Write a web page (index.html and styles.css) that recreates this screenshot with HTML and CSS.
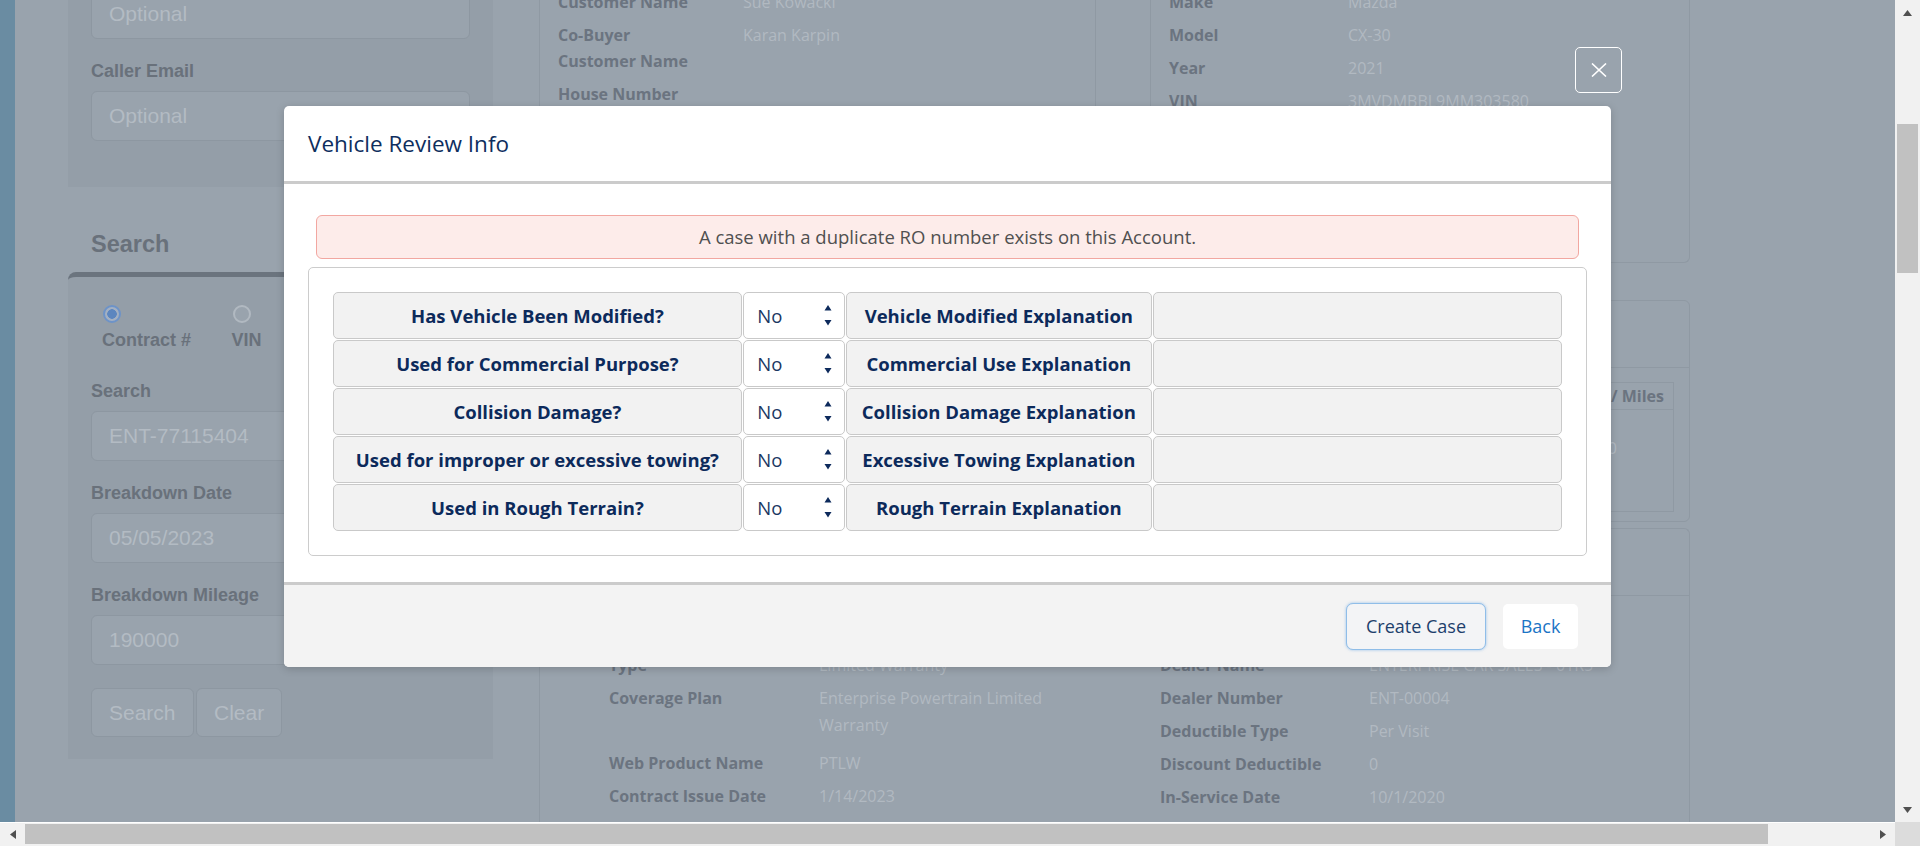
FILE: index.html
```html
<!DOCTYPE html>
<html lang="en">
<head>
<meta charset="utf-8">
<title>Vehicle Review Info</title>
<link rel="stylesheet" href="styles.css">
</head>
<body>
<div class="screen">
  <div class="viewport">
    <div class="page">
      <div class="strip"></div>

      <div class="leftcol">
        <div class="panel panel-caller">
          <div class="input">Optional</div>
          <div class="flabel">Caller Email</div>
          <div class="input">Optional</div>
        </div>
        <div class="sect-title">Search</div>
        <div class="panel panel-search">
          <div class="radios">
            <div class="radio-item"><span class="radio checked"></span><span class="rlabel">Contract #</span></div>
            <div class="radio-item"><span class="radio"></span><span class="rlabel">VIN</span></div>
          </div>
          <div class="flabel first">Search</div>
          <div class="input">ENT-77115404</div>
          <div class="flabel">Breakdown Date</div>
          <div class="input">05/05/2023</div>
          <div class="flabel">Breakdown Mileage</div>
          <div class="input">190000</div>
          <div class="btnrow">
            <div class="pbtn pbtn-search">Search</div>
            <div class="pbtn pbtn-clear">Clear</div>
          </div>
        </div>
      </div>

      <div class="maincol">
        <div class="toprow">
          <div class="card card-a">
            <div class="drow"><div class="dlabel">Customer Name</div><div class="dval">Sue Kowacki</div></div>
            <div class="drow"><div class="dlabel">Co-Buyer<br>Customer Name</div><div class="dval">Karan Karpin</div></div>
            <div class="drow"><div class="dlabel">House Number</div><div class="dval"></div></div>
          </div>
          <div class="card card-b">
            <div class="drow"><div class="dlabel">Make</div><div class="dval">Mazda</div></div>
            <div class="drow"><div class="dlabel">Model</div><div class="dval">CX-30</div></div>
            <div class="drow"><div class="dlabel">Year</div><div class="dval">2021</div></div>
            <div class="drow"><div class="dlabel">VIN</div><div class="dval">3MVDMBBL9MM303580</div></div>
          </div>
        </div>

        <div class="card card-c">
          <div class="card-head"></div>
          <div class="tbl-wrap">
            <div class="tbl">
              <div class="tbl-head"><div class="th">Mileage / Miles</div></div>
              <div class="tbl-body"><div class="td">190000</div></div>
            </div>
          </div>
        </div>

        <div class="card card-d">
          <div class="card-head"></div>
          <div class="details">
            <div class="dcol dcol-left">
              <div class="drow2"><div class="dlabel2">Type</div><div class="dval2">Limited Warranty</div></div>
              <div class="drow2 two"><div class="dlabel2">Coverage Plan</div><div class="dval2">Enterprise Powertrain Limited<br>Warranty</div></div>
              <div class="drow2"><div class="dlabel2">Web Product Name</div><div class="dval2">PTLW</div></div>
              <div class="drow2"><div class="dlabel2">Contract Issue Date</div><div class="dval2">1/14/2023</div></div>
            </div>
            <div class="dcol dcol-right">
              <div class="drow2"><div class="dlabel2">Dealer Name</div><div class="dval2">ENTERPRISE CAR SALES - 01R5</div></div>
              <div class="drow2"><div class="dlabel2">Dealer Number</div><div class="dval2">ENT-00004</div></div>
              <div class="drow2"><div class="dlabel2">Deductible Type</div><div class="dval2">Per Visit</div></div>
              <div class="drow2"><div class="dlabel2">Discount Deductible</div><div class="dval2">0</div></div>
              <div class="drow2"><div class="dlabel2">In-Service Date</div><div class="dval2">10/1/2020</div></div>
            </div>
          </div>
        </div>
      </div>

      <div class="close-btn">
        <svg width="16" height="14" viewBox="0 0 16 14"><path d="M1 0.5 L15 13.5 M15 0.5 L1 13.5" stroke="#ffffff" stroke-width="1.6" fill="none"/></svg>
      </div>

      <div class="modal">
        <div class="modal-head">Vehicle Review Info</div>
        <div class="modal-body">
          <div class="alert">A case with a duplicate RO number exists on this Account.</div>
          <div class="qcard">
            <div class="qgrid">
              <div class="qc">Has Vehicle Been Modified?</div>
              <div class="qsel"><span>No</span><svg class="spin" width="8" height="21" viewBox="0 0 8 21"><path d="M0.5 5.5 L4 0 L7.5 5.5 Z M0.5 15 L7.5 15 L4 20.5 Z" fill="#0d2a5c"/></svg></div>
              <div class="qc">Vehicle Modified Explanation</div>
              <div class="qin"></div>

              <div class="qc">Used for Commercial Purpose?</div>
              <div class="qsel"><span>No</span><svg class="spin" width="8" height="21" viewBox="0 0 8 21"><path d="M0.5 5.5 L4 0 L7.5 5.5 Z M0.5 15 L7.5 15 L4 20.5 Z" fill="#0d2a5c"/></svg></div>
              <div class="qc">Commercial Use Explanation</div>
              <div class="qin"></div>

              <div class="qc">Collision Damage?</div>
              <div class="qsel"><span>No</span><svg class="spin" width="8" height="21" viewBox="0 0 8 21"><path d="M0.5 5.5 L4 0 L7.5 5.5 Z M0.5 15 L7.5 15 L4 20.5 Z" fill="#0d2a5c"/></svg></div>
              <div class="qc">Collision Damage Explanation</div>
              <div class="qin"></div>

              <div class="qc">Used for improper or excessive towing?</div>
              <div class="qsel"><span>No</span><svg class="spin" width="8" height="21" viewBox="0 0 8 21"><path d="M0.5 5.5 L4 0 L7.5 5.5 Z M0.5 15 L7.5 15 L4 20.5 Z" fill="#0d2a5c"/></svg></div>
              <div class="qc">Excessive Towing Explanation</div>
              <div class="qin"></div>

              <div class="qc">Used in Rough Terrain?</div>
              <div class="qsel"><span>No</span><svg class="spin" width="8" height="21" viewBox="0 0 8 21"><path d="M0.5 5.5 L4 0 L7.5 5.5 Z M0.5 15 L7.5 15 L4 20.5 Z" fill="#0d2a5c"/></svg></div>
              <div class="qc">Rough Terrain Explanation</div>
              <div class="qin"></div>
            </div>
          </div>
        </div>
        <div class="modal-foot">
          <div class="mbtn mbtn-create">Create Case</div>
          <div class="mbtn mbtn-back">Back</div>
        </div>
      </div>
    </div>

    <div class="vscroll">
      <div class="sb-arrow"><svg width="9" height="6" viewBox="0 0 9 6"><path d="M0 6 L4.5 0 L9 6 Z" fill="#505050"/></svg></div>
      <div class="vtrack"><div class="vthumb"></div></div>
      <div class="sb-arrow"><svg width="9" height="6" viewBox="0 0 9 6"><path d="M0 0 L9 0 L4.5 6 Z" fill="#505050"/></svg></div>
    </div>
  </div>

  <div class="hscroll">
    <div class="hbar">
      <div class="sb-harrow"><svg width="6" height="9" viewBox="0 0 6 9"><path d="M6 0 L6 9 L0 4.5 Z" fill="#505050"/></svg></div>
      <div class="htrack"><div class="hthumb"></div></div>
      <div class="sb-harrow"><svg width="6" height="9" viewBox="0 0 6 9"><path d="M0 0 L6 4.5 L0 9 Z" fill="#505050"/></svg></div>
    </div>
    <div class="corner"></div>
  </div>
</div>
</body>
</html>
```

FILE: styles.css
```css
* { box-sizing: border-box; }

html, body {
  margin: 0;
  padding: 0;
  width: 1920px;
  height: 846px;
  overflow: hidden;
}

.screen {
  display: flex;
  flex-direction: column;
  width: 1920px;
  height: 846px;
}

.viewport {
  display: flex;
  height: 822px;
  flex: none;
}

.page {
  position: relative;
  flex: 1;
  overflow: hidden;
  background: #99a3ad;
  display: flex;
  align-items: flex-start;
}

.strip {
  width: 15px;
  flex: none;
  align-self: stretch;
  background: #6a8ca2;
}

/* ---------- left column ---------- */
.leftcol {
  width: 425px;
  flex: none;
  margin-left: 53px;
  margin-top: -11px;
  font-family: "Liberation Sans", Arial, sans-serif;
}

.panel {
  background: #949ea8;
  padding: 0 23px;
}

.panel-caller {
  padding-bottom: 46px;
}

.input {
  width: 379px;
  height: 50px;
  border: 1px solid #8d97a1;
  border-radius: 6px;
  background: #99a3ad;
  color: #b3bbc3;
  font-size: 21px;
  padding-left: 17px;
  display: flex;
  align-items: center;
}

.flabel {
  font-weight: 700;
  font-size: 18px;
  line-height: 22px;
  color: #69717b;
  margin-top: 21px;
  margin-bottom: 9px;
}

.flabel.first {
  margin-top: 29px;
}

.sect-title {
  font-weight: 700;
  font-size: 23.5px;
  line-height: 28px;
  color: #69717b;
  padding-left: 23px;
  margin-top: 43px;
  margin-bottom: 14px;
}

.panel-search {
  border-top: 5px solid #6b747e;
  border-top-left-radius: 8px;
  height: 487px;
}

.radios {
  display: flex;
  padding-left: 11px;
  padding-top: 28px;
}

.radio-item {
  width: 129.5px;
  display: flex;
  flex-direction: column;
  align-items: flex-start;
  gap: 6px;
}

.radio {
  display: block;
  width: 18px;
  height: 18px;
  border-radius: 50%;
  border: 2px solid #b1b9c1;
  margin-left: 1px;
  background: #99a3ad;
}

.radio.checked {
  border-color: #6d93c8;
  background: radial-gradient(circle, #5c86bf 0 4.5px, #a3b0c2 5px);
}

.rlabel {
  font-weight: 700;
  font-size: 18px;
  line-height: 22px;
  color: #69717b;
}

.btnrow {
  display: flex;
  gap: 2px;
  margin-top: 23px;
}

.pbtn {
  height: 49px;
  border: 1px solid #8d97a1;
  border-radius: 6px;
  background: #99a3ad;
  color: #b3bbc3;
  font-size: 21px;
  display: flex;
  align-items: center;
  padding-left: 17px;
}

.pbtn-search { width: 103px; }
.pbtn-clear { width: 86px; }

/* ---------- main column ---------- */
.maincol {
  width: 1151px;
  flex: none;
  margin-left: 46px;
  margin-top: -23px;
  display: flex;
  flex-direction: column;
  font-family: "Open Sans", sans-serif;
}

.card {
  border: 1px solid #8f99a3;
  border-radius: 6px;
  background: #99a3ad;
}

.toprow {
  display: flex;
  gap: 54px;
  height: 286px;
}

.card-a, .card-b {
  padding: 12px 0 0 18px;
  border-top: none;
  border-top-left-radius: 0;
  border-top-right-radius: 0;
}

.card-a { width: 557px; }
.card-b { width: 540px; }

.drow {
  display: flex;
  font-size: 16px;
  line-height: 26px;
  margin-bottom: 7px;
}

.dlabel {
  font-weight: 700;
  color: #6b7480;
  flex: none;
}

.card-a .dlabel { width: 185px; }
.card-b .dlabel { width: 179px; }

.dval {
  font-weight: 400;
  color: #b1b9c1;
}

.card-c {
  margin-top: 37px;
  height: 222px;
}

.card-c .card-head {
  height: 67px;
  border-bottom: 1px solid #8f99a3;
}

.tbl-wrap {
  padding: 14px 15px 0 15px;
}

.tbl {
  border: 1px solid #8f99a3;
  height: 130px;
}

.tbl-head {
  height: 27px;
  border-bottom: 1px solid #8f99a3;
  display: flex;
  justify-content: flex-end;
}

.th {
  font-weight: 700;
  font-size: 16px;
  line-height: 26px;
  color: #6b7480;
  padding-right: 9px;
}

.tbl-body {
  display: flex;
  justify-content: flex-end;
  padding-top: 25px;
  padding-right: 56px;
}

.td {
  font-weight: 400;
  font-size: 16px;
  line-height: 26px;
  color: #b1b9c1;
}

.card-d {
  margin-top: 6px;
  height: 320px;
  border-bottom: none;
}

.card-d .card-head {
  height: 67px;
  border-bottom: 1px solid #8f99a3;
}

.details {
  display: flex;
  padding-left: 69px;
  padding-top: 56px;
}

.dcol-left { width: 551px; }

.drow2 {
  display: flex;
  font-size: 16px;
  line-height: 27px;
  margin-bottom: 6px;
}

.drow2.two { margin-bottom: 11px; }

.dlabel2 {
  font-weight: 700;
  color: #6b7480;
  flex: none;
  width: 210px;
}

.dcol-right .dlabel2 { width: 209px; }

.dval2 {
  font-weight: 400;
  color: #b1b9c1;
}

/* ---------- close button ---------- */
.close-btn {
  position: absolute;
  left: 1575px;
  top: 47px;
  width: 47px;
  height: 46px;
  border: 1.5px solid #ffffff;
  border-radius: 5px;
  display: flex;
  align-items: center;
  justify-content: center;
}

/* ---------- modal ---------- */
.modal {
  position: absolute;
  left: 284px;
  top: 106px;
  width: 1327px;
  background: #ffffff;
  border-radius: 5px;
  box-shadow: 0 2px 8px rgba(0, 0, 0, 0.18);
  font-family: "Open Sans", sans-serif;
  overflow: hidden;
}

.modal-head {
  height: 78px;
  border-bottom: 3px solid #cbcbcb;
  padding-left: 24px;
  display: flex;
  align-items: center;
  font-size: 22.5px;
  font-weight: 400;
  color: #0e2e5e;
  padding-bottom: 1px;
}

.modal-body {
  padding: 31px 24px 26px 24px;
}

.alert {
  margin: 0 8px;
  height: 44px;
  border: 1px solid #f2a7a1;
  border-radius: 6px;
  background: #fdecea;
  color: #505050;
  font-size: 18.5px;
  display: flex;
  align-items: center;
  justify-content: center;
  padding-bottom: 2px;
}

.qcard {
  margin-top: 8px;
  border: 1px solid #cccccc;
  border-radius: 5px;
  padding: 24px;
}

.qgrid {
  display: grid;
  grid-template-columns: 408fr 101fr 305fr 408fr;
  grid-auto-rows: 47px;
  gap: 1px 1.5px;
}

.qc, .qin, .qsel {
  border: 1px solid #c9c9c9;
  border-radius: 5px;
}

.qc {
  background: #f2f2f2;
  display: flex;
  align-items: center;
  justify-content: center;
  font-size: 18.5px;
  font-weight: 700;
  color: #0c2a5b;
  white-space: nowrap;
}

.qin {
  background: #f2f2f2;
}

.qsel {
  background: #ffffff;
  display: flex;
  align-items: center;
  justify-content: space-between;
  padding: 0 12px 0 13px;
  font-size: 18.5px;
  color: #1a3763;
}

.spin { display: block; }

.modal-foot {
  height: 85px;
  border-top: 3px solid #cbcbcb;
  background: #f3f3f3;
  display: flex;
  align-items: center;
  justify-content: flex-end;
  gap: 17px;
  padding-right: 33px;
}

.mbtn {
  display: flex;
  align-items: center;
  justify-content: center;
  font-size: 18px;
}

.mbtn-create {
  width: 140px;
  height: 47px;
  border: 1px solid #8fbde8;
  border-radius: 7px;
  box-shadow: 0 0 3px rgba(110, 170, 230, 0.7);
  background: #f3f4f6;
  color: #1d3f6c;
}

.mbtn-back {
  width: 75px;
  height: 45px;
  border-radius: 5px;
  background: #ffffff;
  color: #1b74c5;
}

/* ---------- scrollbars ---------- */
.vscroll {
  width: 25px;
  flex: none;
  background: #f1f1f1;
  display: flex;
  flex-direction: column;
}

.sb-arrow {
  height: 25px;
  display: flex;
  align-items: center;
  justify-content: center;
}

.vtrack {
  flex: 1;
  padding-top: 99px;
}

.vthumb {
  margin: 0 2px;
  height: 149px;
  background: #c1c1c1;
}

.hscroll {
  display: flex;
  height: 24px;
  flex: none;
}

.hbar {
  flex: 1;
  display: flex;
  background: #f1f1f1;
  border-top: 1px solid #ffffff;
}

.sb-harrow {
  width: 25px;
  display: flex;
  align-items: center;
  justify-content: center;
}

.htrack {
  flex: 1;
  padding-top: 1px;
}

.hthumb {
  width: 1743px;
  height: 20px;
  background: #c1c1c1;
}

.corner {
  width: 25px;
  background: #dcdcdc;
}
```
